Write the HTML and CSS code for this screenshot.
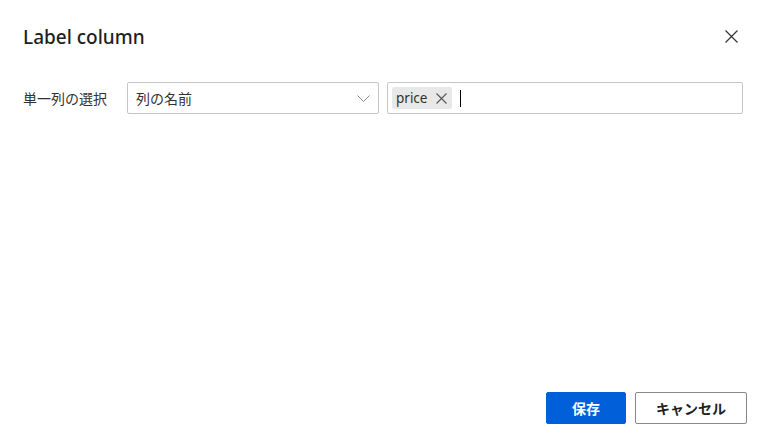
FILE: index.html
```html
<!DOCTYPE html>
<html lang="ja">
<head>
<meta charset="utf-8">
<link rel="stylesheet" href="styles.css">
</head>
<body>
<div class="dialog">
  <div class="header">
    <h1 class="title">Label column</h1>
    <button class="close" aria-label="close">
      <svg width="13" height="13" viewBox="0 0 13 13"><path d="M0.5 0.5 L12.5 12.5 M12.5 0.5 L0.5 12.5" stroke="#333" stroke-width="1.2" fill="none"/></svg>
    </button>
  </div>
  <div class="row">
    <div class="label">単一列の選択</div>
    <div class="select">
      <span class="select-text">列の名前</span>
      <svg class="chevron" width="13" height="7" viewBox="0 0 13 7"><path d="M0.5 0.5 L6.5 6.5 L12.5 0.5" stroke="#8a8a8a" stroke-width="1" fill="none"/></svg>
    </div>
    <div class="tags">
      <span class="tag">price
        <svg class="tag-x" width="11" height="11" viewBox="0 0 11 11"><path d="M0.5 0.5 L10.5 10.5 M10.5 0.5 L0.5 10.5" stroke="#555" stroke-width="1.1" fill="none"/></svg>
      </span>
      <span class="caret"></span>
    </div>
  </div>
  <div class="footer">
    <button class="btn primary">保存</button>
    <button class="btn secondary">キャンセル</button>
  </div>
</div>
</body>
</html>
```
FILE: styles.css
```css
html, body {
  margin: 0;
  padding: 0;
  background: #ffffff;
}
body {
  font-family: "Noto Sans", "Noto Sans CJK JP", sans-serif;
  color: #201f1e;
}
.dialog {
  width: 768px;
  height: 447px;
  box-sizing: border-box;
  padding: 23px 21px 23px 23px;
  display: flex;
  flex-direction: column;
}
.header {
  display: flex;
  align-items: center;
  justify-content: space-between;
  height: 28px;
}
.title {
  margin: 0;
  font-size: 19px;
  font-weight: 500;
  color: #201f1e;
  letter-spacing: 0;
}
.close {
  border: none;
  background: none;
  padding: 0;
  margin-right: 9px;
  margin-top: -2px;
  width: 13px;
  height: 13px;
  display: flex;
}
.row {
  margin-top: 31px;
  display: flex;
  align-items: center;
}
.label {
  width: 104px;
  font-size: 14px;
  font-family: "Noto Sans CJK JP", sans-serif;
  color: #323130;
}
.select {
  width: 252px;
  height: 32px;
  box-sizing: border-box;
  border: 1px solid #c8c6c4;
  border-radius: 2px;
  display: flex;
  align-items: center;
  justify-content: space-between;
  padding: 0 8px 0 8px;
}
.select-text {
  font-size: 14px;
  font-family: "Noto Sans CJK JP", sans-serif;
  color: #323130;
}
.chevron {
  margin-top: 1px;
}
.tags {
  margin-left: 8px;
  width: 356px;
  height: 32px;
  box-sizing: border-box;
  border: 1px solid #c8c6c4;
  border-radius: 2px;
  display: flex;
  align-items: center;
  padding: 0 4px;
}
.tag {
  display: flex;
  align-items: center;
  height: 22px;
  width: 60px;
  box-sizing: border-box;
  padding: 0 4px 0 4px;
  background: #e8e8e8;
  border-radius: 2px;
  font-size: 13.5px;
  color: #323130;
  gap: 9px;
}
.tag-x {
  flex: none;
}
.caret {
  display: block;
  width: 1px;
  height: 17px;
  background: #000;
  margin-left: 8px;
}
.footer {
  margin-top: auto;
  display: flex;
  justify-content: flex-end;
  gap: 9px;
}
.btn {
  height: 32px;
  box-sizing: border-box;
  border-radius: 2px;
  font-family: "Noto Sans CJK JP", sans-serif;
  font-size: 14px;
  padding: 0;
}
.primary {
  width: 80px;
  margin-right: 0;
  background: #005fd9;
  border: 1px solid #005fd9;
  color: #ffffff;
  font-weight: 700;
}
.secondary {
  width: 112px;
  background: #ffffff;
  border: 1px solid #8a8886;
  color: #201f1e;
  font-weight: 700;
}
```
